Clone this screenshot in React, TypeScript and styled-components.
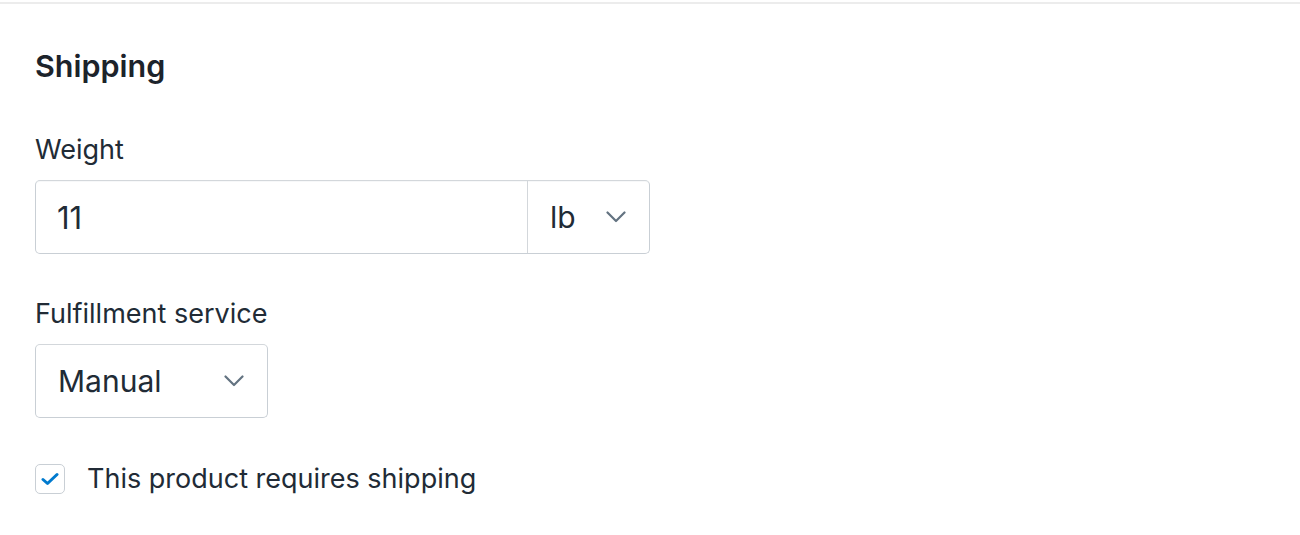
import React from "react";
import styled, { createGlobalStyle } from "styled-components";

const Global = createGlobalStyle`
  html, body { margin: 0; padding: 0; background: #ffffff; }
  body { font-family: Inter, "Noto Sans", "Liberation Sans", sans-serif; color: #212b36; }
`;

const Page = styled.div`
  width: 1300px;
  height: 535px;
  overflow: hidden;
  background: #fff;
  border-top: 2px solid #ececec;
  margin-top: 2px;
  box-sizing: border-box;
`;

const Section = styled.section`
  padding: 44px 35px 0 35px;
  display: flex;
  flex-direction: column;
`;

const Heading = styled.h2`
  margin: 0;
  font-size: 30.5px;
  line-height: 36px;
  font-weight: 600;
  color: #1c232b;
`;

const Field = styled.div<{ $top: number }>`
  margin-top: ${(p) => p.$top}px;
  display: flex;
  flex-direction: column;
`;

const Label = styled.label`
  font-size: 27px;
  line-height: 32px;
  color: #212b36;
  margin-bottom: 14px;
`;

const Connected = styled.div`
  display: flex;
  width: 615px;
  height: 74px;
  box-sizing: border-box;
  border: 1.5px solid #c9cfd5;
  border-top-color: #d3d7db;
  border-radius: 5px;
  box-shadow: inset 0 1px 0 rgba(99, 115, 129, 0.05);
`;

const ValueCell = styled.div`
  flex: 1;
  display: flex;
  align-items: center;
  padding-left: 21px;
  font-size: 31px;
  color: #212b36;
`;

const SelectBox = styled.div<{ $width: number; $bordered?: boolean }>`
  width: ${(p) => p.$width}px;
  height: ${(p) => (p.$bordered ? "74px" : "auto")};
  box-sizing: border-box;
  display: flex;
  align-items: center;
  justify-content: space-between;
  padding: 0 23px 0 22px;
  font-size: 30px;
  color: #212b36;
  ${(p) =>
    p.$bordered
      ? `border: 1.5px solid #c9cfd5; border-top-color: #d3d7db; border-radius: 5px;`
      : `border-left: 1.5px solid #d3d7db;`}
`;

const CheckRow = styled.div`
  margin-top: 44px;
  display: flex;
  align-items: center;
  gap: 22px;
`;

const Box = styled.span`
  width: 30px;
  height: 30px;
  box-sizing: border-box;
  border: 1.5px solid #c9cfd5;
  border-radius: 5px;
  display: flex;
  align-items: center;
  justify-content: center;
  background: #fff;
`;

const CheckText = styled.span`
  font-size: 27px;
  color: #212b36;
`;

const Chevron = () => (
  <svg width="20" height="12" viewBox="0 0 20 12" fill="none">
    <polyline points="1.5,1.5 10,10 18.5,1.5" stroke="#637381" strokeWidth="2.2" strokeLinecap="round" strokeLinejoin="round" />
  </svg>
);

export default function App() {
  return (
    <>
      <Global />
      <Page>
        <Section>
          <Heading>Shipping</Heading>
          <Field $top={50}>
            <Label>Weight</Label>
            <Connected>
              <ValueCell>11</ValueCell>
              <SelectBox $width={122}>
                <span>lb</span>
                <Chevron />
              </SelectBox>
            </Connected>
          </Field>
          <Field $top={44}>
            <Label>Fulfillment service</Label>
            <SelectBox $width={233} $bordered>
              <span>Manual</span>
              <Chevron />
            </SelectBox>
          </Field>
          <CheckRow>
            <Box>
              <svg width="18" height="14" viewBox="0 0 18 14" fill="none">
                <polyline points="2,7.5 6.5,11.5 16,2.5" stroke="#007ace" strokeWidth="3" strokeLinecap="round" strokeLinejoin="round" />
              </svg>
            </Box>
            <CheckText>This product requires shipping</CheckText>
          </CheckRow>
        </Section>
      </Page>
    </>
  );
}
